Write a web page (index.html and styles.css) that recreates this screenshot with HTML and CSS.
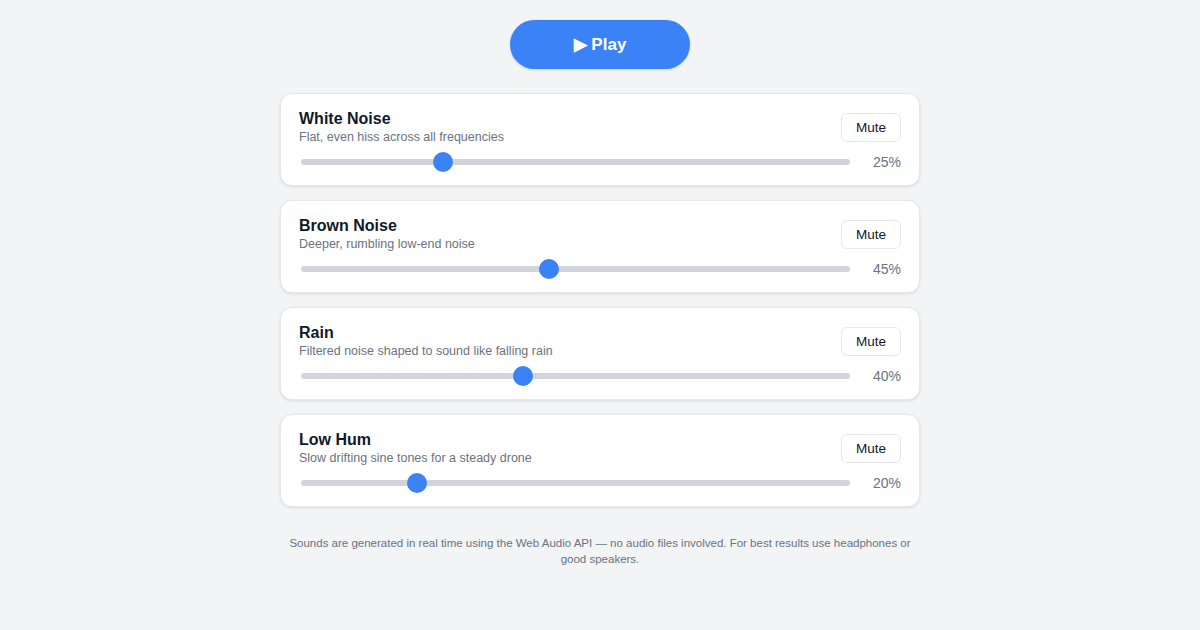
FILE: index.html
```html
<!DOCTYPE html>
<html lang="en">
<head>
<meta charset="utf-8">
<title>Ambient Noise</title>
<link rel="stylesheet" href="styles.css">
</head>
<body>
<main class="app">
  <button class="play-btn">▶ Play</button>

  <section class="card">
    <div class="card-head">
      <div class="card-text">
        <h2 class="card-title">White Noise</h2>
        <p class="card-desc">Flat, even hiss across all frequencies</p>
      </div>
      <button class="mute-btn">Mute</button>
    </div>
    <div class="slider-row">
      <input class="slider" type="range" min="0" max="100" value="25">
      <span class="pct">25%</span>
    </div>
  </section>

  <section class="card">
    <div class="card-head">
      <div class="card-text">
        <h2 class="card-title">Brown Noise</h2>
        <p class="card-desc">Deeper, rumbling low-end noise</p>
      </div>
      <button class="mute-btn">Mute</button>
    </div>
    <div class="slider-row">
      <input class="slider" type="range" min="0" max="100" value="45">
      <span class="pct">45%</span>
    </div>
  </section>

  <section class="card">
    <div class="card-head">
      <div class="card-text">
        <h2 class="card-title">Rain</h2>
        <p class="card-desc">Filtered noise shaped to sound like falling rain</p>
      </div>
      <button class="mute-btn">Mute</button>
    </div>
    <div class="slider-row">
      <input class="slider" type="range" min="0" max="100" value="40">
      <span class="pct">40%</span>
    </div>
  </section>

  <section class="card">
    <div class="card-head">
      <div class="card-text">
        <h2 class="card-title">Low Hum</h2>
        <p class="card-desc">Slow drifting sine tones for a steady drone</p>
      </div>
      <button class="mute-btn">Mute</button>
    </div>
    <div class="slider-row">
      <input class="slider" type="range" min="0" max="100" value="20">
      <span class="pct">20%</span>
    </div>
  </section>

  <p class="footnote">Sounds are generated in real time using the Web Audio API — no audio files involved. For best results use headphones or good speakers.</p>
</main>
</body>
</html>
```

FILE: styles.css
```css
* { box-sizing: border-box; }

html, body {
  margin: 0;
  padding: 0;
  background: #f3f4f6;
  font-family: "Liberation Sans", Arial, sans-serif;
  color: #111827;
}

.app {
  width: 640px;
  margin: 0 auto;
  padding-top: 20px;
  display: flex;
  flex-direction: column;
  align-items: stretch;
}

.play-btn {
  align-self: center;
  width: 180px;
  height: 49px;
  border: none;
  border-radius: 999px;
  background: #3b82f6;
  color: #ffffff;
  font-family: inherit;
  font-size: 17px;
  font-weight: 700;
  box-shadow: 0 1px 3px rgba(0, 0, 0, 0.12);
  margin-bottom: 24px;
  cursor: pointer;
}

.card {
  background: #ffffff;
  border: 1px solid #e5e7eb;
  border-radius: 12px;
  box-shadow: 0 1px 3px rgba(0, 0, 0, 0.1);
  padding: 15px 18px 13px 18px;
  margin-bottom: 14px;
}

.card-head {
  display: flex;
  align-items: center;
  justify-content: space-between;
}

.card-title {
  margin: 0;
  font-size: 16px;
  line-height: 20px;
  font-weight: 700;
  color: #111827;
}

.card-desc {
  margin: 0;
  font-size: 12.5px;
  line-height: 16px;
  color: #6b7280;
}

.mute-btn {
  width: 60px;
  height: 29px;
  margin-top: 1px;
  background: #ffffff;
  border: 1px solid #e5e7eb;
  border-radius: 6px;
  font-family: inherit;
  font-size: 13.5px;
  color: #111827;
  padding: 0;
  cursor: pointer;
}

.slider-row {
  display: flex;
  align-items: center;
  margin-top: 7px;
  height: 20px;
}

.slider {
  -webkit-appearance: none;
  appearance: none;
  flex: 1;
  height: 20px;
  margin: 0 3px 0 2px;
  background: transparent;
}

.slider::-webkit-slider-runnable-track {
  height: 6px;
  background: #d1d5db;
  border-radius: 3px;
}

.slider::-webkit-slider-thumb {
  -webkit-appearance: none;
  width: 20px;
  height: 20px;
  border-radius: 50%;
  background: #3b82f6;
  border: none;
  margin-top: -7px;
}

.slider::-moz-range-track {
  height: 6px;
  background: #d1d5db;
  border-radius: 3px;
}

.slider::-moz-range-thumb {
  width: 20px;
  height: 20px;
  border-radius: 50%;
  background: #3b82f6;
  border: none;
}

.pct {
  width: 48px;
  text-align: right;
  font-size: 14px;
  color: #6b7280;
}

.footnote {
  margin: 14px 0 0 0;
  font-size: 11.5px;
  line-height: 16px;
  color: #6b7280;
  text-align: center;
}
```
